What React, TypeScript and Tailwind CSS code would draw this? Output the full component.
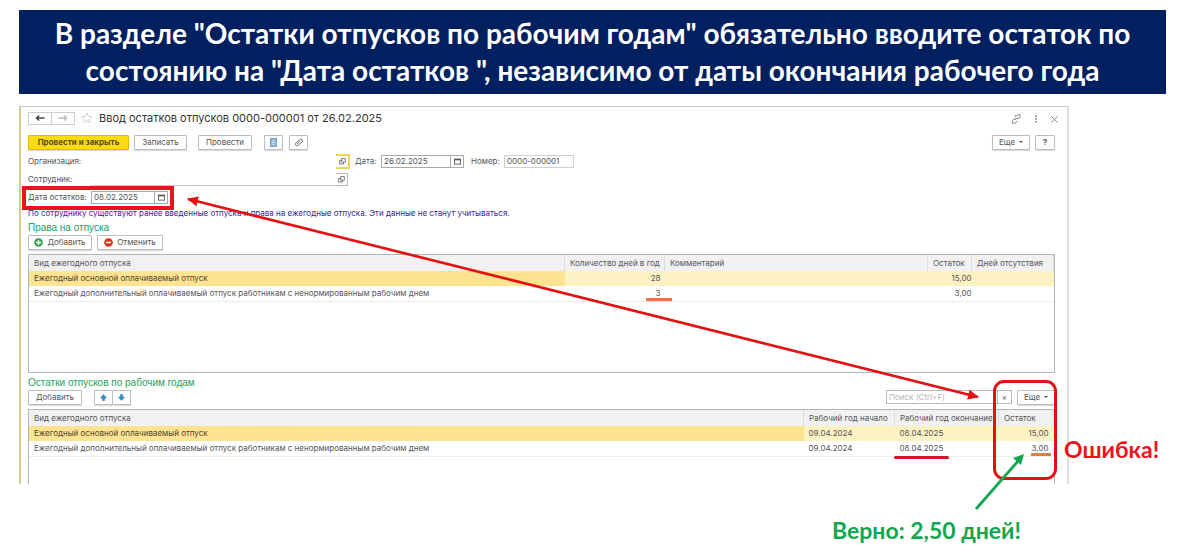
import type { ReactNode } from "react";

const button =
  "flex h-[15px] items-center justify-center rounded-[1px] border border-[#bdbdbd] bg-white text-[#555] shadow-[0_1px_1px_#d8d8d8]";
const headCell = "border-r border-[#dcdcdc] px-[5px] text-left font-normal whitespace-nowrap";

function CalendarIcon() {
  return (
    <svg viewBox="0 0 8 8" className="size-[7px]" fill="none" stroke="#555" aria-hidden="true">
      <rect x="0.5" y="1.5" width="7" height="5.5" />
      <path d="M0 1.8h8" strokeWidth="1.8" />
    </svg>
  );
}

function OpenIcon() {
  return (
    <svg viewBox="0 0 8 8" className="size-[7px]" fill="none" stroke="#555" strokeWidth="0.9" aria-hidden="true">
      <path d="M3 .7h4.3v4H3zM3 2.8H.7v4h4.5V4.7" />
    </svg>
  );
}

function Arrow({ dir, color }: { dir: "left" | "right"; color: string }) {
  return (
    <svg viewBox="0 0 10 8" className="h-2 w-[10px]" fill="none" stroke={color} strokeWidth="1.5" aria-hidden="true">
      {dir === "left" ? <path d="M9.5 4H1.5M4 1.5 1.5 4 4 6.5" /> : <path d="M.5 4h8M6 1.5 8.5 4 6 6.5" />}
    </svg>
  );
}

function BlueArrow({ down }: { down?: boolean }) {
  return (
    <svg viewBox="0 0 8 8" className="size-[7px]" fill="#2f93c8" stroke="#1d6f9f" strokeWidth="0.5" aria-hidden="true">
      {down ? <path d="M2.7.5h2.6v3h2.2L4 7.5.5 3.5h2.2z" /> : <path d="M4 .5 7.5 4.5H5.3v3H2.7v-3H.5z" />}
    </svg>
  );
}

function DateField({ id, label, value, wide }: { id: string; label: string; value: string; wide?: boolean }) {
  return (
    <div className="flex items-center">
      <label htmlFor={id} className={wide ? "w-[26px]" : "w-[63px] whitespace-nowrap"}>
        {label}
      </label>
      <input
        id={id}
        defaultValue={value}
        className={
          wide
            ? "h-[13px] w-[70px] border border-[#aaa] bg-white px-[2px] text-[8px]"
            : "h-[13px] w-[64px] border border-[#aaa] bg-white px-[2px] text-[8px]"
        }
      />
      <button
        type="button"
        aria-label="Календарь"
        className="flex h-[13px] w-[13px] items-center justify-center border border-l-0 border-[#aaa]"
      >
        <CalendarIcon />
      </button>
    </div>
  );
}

function Marked({ children, line }: { children: ReactNode; line: string }) {
  return (
    <span className="relative">
      {children}
      <span className={line} />
    </span>
  );
}

function RightsTable() {
  return (
    <div className="h-[119px] border border-[#b5b5b5]">
      <table className="w-full table-fixed border-collapse">
        <colgroup>
          <col />
          <col className="w-[100px]" />
          <col className="w-[263px]" />
          <col className="w-[44px]" />
          <col className="w-[82px]" />
        </colgroup>
        <thead>
          <tr className="h-[16px] bg-[#f1f1f1]">
            <th className={headCell}>Вид ежегодного отпуска</th>
            <th className={headCell}>Количество дней в год</th>
            <th className={headCell}>Комментарий</th>
            <th className={headCell}>Остаток</th>
            <th className={headCell}>Дней отсутствия</th>
          </tr>
        </thead>
        <tbody>
          <tr className="h-[15px] bg-[#fdf2c4]">
            <td className="bg-[#fee391] px-[5px] text-[#4d4630]">Ежегодный основной оплачиваемый отпуск</td>
            <td className="px-[4px] text-right">28</td>
            <td />
            <td className="text-right">15,00</td>
            <td />
          </tr>
          <tr className="h-[15px] border-b border-[#ececec]">
            <td className="px-[5px] whitespace-nowrap">
              Ежегодный дополнительный оплачиваемый отпуск работникам с ненормированным рабочим днем
            </td>
            <td className="px-[4px] text-right">
              <Marked line="absolute -right-[11px] -bottom-[3px] h-[3px] w-[26px] bg-[#dd7f3c]">3</Marked>
            </td>
            <td />
            <td className="text-right">3,00</td>
            <td />
          </tr>
        </tbody>
      </table>
    </div>
  );
}

function BalancesTable() {
  return (
    <div className="h-[75px] border border-b-0 border-[#b5b5b5]">
      <table className="w-full table-fixed border-collapse">
        <colgroup>
          <col />
          <col className="w-[91px]" />
          <col className="w-[104px]" />
          <col className="w-[55px]" />
        </colgroup>
        <thead>
          <tr className="h-[16px] bg-[#f1f1f1]">
            <th className={headCell}>Вид ежегодного отпуска</th>
            <th className={headCell}>Рабочий год начало</th>
            <th className={headCell}>Рабочий год окончание</th>
            <th className={headCell}>Остаток</th>
          </tr>
        </thead>
        <tbody>
          <tr className="h-[15px] bg-[#fdf2c4]">
            <td className="bg-[#fee391] px-[5px] text-[#4d4630]">Ежегодный основной оплачиваемый отпуск</td>
            <td className="px-[5px]">09.04.2024</td>
            <td className="px-[5px]">08.04.2025</td>
            <td className="px-[5px] text-right">15,00</td>
          </tr>
          <tr className="h-[15px] border-b border-[#ececec]">
            <td className="px-[5px] whitespace-nowrap">
              Ежегодный дополнительный оплачиваемый отпуск работникам с ненормированным рабочим днем
            </td>
            <td className="px-[5px]">09.04.2024</td>
            <td className="px-[5px]">
              <Marked line="absolute -bottom-[6px] -left-[6px] h-[3px] w-[55px] rounded-full bg-[#d3142c]">
                08.04.2025
              </Marked>
            </td>
            <td className="px-[5px] text-right">
              <Marked line="absolute -right-[2px] -bottom-[3px] h-[3px] w-[20px] bg-[#dd7f3c]">3,00</Marked>
            </td>
          </tr>
        </tbody>
      </table>
    </div>
  );
}

function Annotations() {
  return (
    <div className="pointer-events-none absolute inset-0">
      <div className="absolute top-[80px] left-[3px] h-[24px] w-[152px] border-4 border-[#e8131f]" />
      <svg
        className="absolute top-[93px] right-[91px] left-[169px] h-[198px] w-[calc(100%-260px)] overflow-visible"
        aria-hidden="true"
      >
        <defs>
          <marker
            id="redHead"
            viewBox="0 0 11 10"
            refX="10"
            refY="5"
            markerWidth="11"
            markerHeight="10"
            markerUnits="userSpaceOnUse"
            orient="auto-start-reverse"
          >
            <path d="M0 0 11 5 0 10z" fill="#e60f12" />
          </marker>
        </defs>
        <line
          x1="0"
          y1="0"
          x2="100%"
          y2="100%"
          stroke="#e60f12"
          strokeWidth="2.6"
          markerStart="url(#redHead)"
          markerEnd="url(#redHead)"
        />
      </svg>
      <div className="absolute top-[274px] right-[12px] h-[100px] w-[64px] rounded-[11px] border-3 border-[#e60f12]" />
      <svg
        viewBox="0 0 52 58"
        className="absolute top-[346px] right-[43px] h-[58px] w-[52px]"
        fill="none"
        aria-hidden="true"
      >
        <path d="M2 57 45 8" stroke="#12a650" strokeWidth="2.8" />
        <path d="M50 2 47 13 39 6z" fill="#12a650" />
      </svg>
      <strong className="absolute top-[328px] left-[calc(100%-5px)] font-[Lato,sans-serif] text-[23px] leading-[30px] whitespace-nowrap text-[#f01018]">
        Ошибка!
      </strong>
      <strong className="absolute top-[409px] right-[48px] font-[Lato,sans-serif] text-[23px] leading-[30px] whitespace-nowrap text-[#12a650]">
        Верно: 2,50 дней!
      </strong>
    </div>
  );
}

function EntryWindow() {
  return (
    <section className="relative mt-3 mr-[97px] font-[Inter,'Liberation_Sans',sans-serif] text-[8px] leading-[11px] text-[#555]">
      <div className="flex flex-col border-t border-r-2 border-l-2 border-t-[#c9c9c9] border-r-[#dedede] border-l-[#d2cf8e] bg-white pr-[12px] pl-[7px]">
        <header className="flex h-[25px] items-center pb-[3px]">
          <div className="flex">
            <button type="button" aria-label="Назад" className="flex h-[13px] w-6 items-center justify-center border border-[#ccc]">
              <Arrow dir="left" color="#444" />
            </button>
            <button type="button" aria-label="Вперед" className="flex h-[13px] w-[23px] items-center justify-center border border-l-0 border-[#ccc]">
              <Arrow dir="right" color="#bbb" />
            </button>
          </div>
          <svg viewBox="0 0 12 12" className="ml-[6px] size-3" fill="none" stroke="#d0d0d0" strokeWidth="0.9" aria-hidden="true">
            <path d="m6 1 1.4 3.4 3.6.3-2.7 2.4.8 3.6L6 8.8l-3.1 1.9.8-3.6L1 4.7l3.6-.3z" />
          </svg>
          <h2 className="ml-[6px] text-[11px] leading-[15px] text-[#333]">
            Ввод остатков отпусков 0000-000001 от 26.02.2025
          </h2>
          <div className="-mr-[3px] ml-auto flex items-center gap-[11px] pt-[2px]">
            <svg viewBox="0 0 10 10" className="size-[10px]" fill="none" stroke="#888" strokeWidth="1" aria-hidden="true">
              <path d="M4.2 3.2V1.6h1.6L7 .8h2v2.8L7.6 4.6H5.8M5.8 6.8v1L4 9.2H1.4V6.4L3 5h1.6" />
              <path d="M3.8 6.2 6.4 3.6" />
            </svg>
            <svg viewBox="0 0 8 10" className="h-[10px] w-2" fill="#777" aria-hidden="true">
              <path d="M3.2 1.5h1.6v1.6H3.2zM3.2 4.2h1.6v1.6H3.2zM3.2 6.9h1.6v1.6H3.2z" />
            </svg>
            <svg viewBox="0 0 8 8" className="size-[7px]" stroke="#777" strokeWidth="1" aria-hidden="true">
              <path d="m.5.5 7 7m0-7-7 7" />
            </svg>
          </div>
        </header>

        <div className="flex h-5 items-center">
          <button type="button" className="flex h-[15px] w-[101px] items-center justify-center rounded-[1px] border border-[#dfb90c] bg-[#fbdc10] font-bold text-[#5b4d0c] shadow-[0_1px_1px_#d8d8d8]">
            Провести и закрыть
          </button>
          <button type="button" className={`${button} ml-[5px] w-[53px]`}>
            Записать
          </button>
          <button type="button" className={`${button} ml-[11px] w-[54px]`}>
            Провести
          </button>
          <button type="button" aria-label="Отчет" className={`${button} ml-3 w-[19px]`}>
            <svg viewBox="0 0 8 10" className="h-[9px] w-[7px]" aria-hidden="true">
              <path d="M.5.5h7v9h-7z" fill="#8db9db" stroke="#5d8fb7" />
              <path d="M2 3h4M2 5h4M2 7h4" stroke="#e8f2fa" strokeWidth="0.7" />
            </svg>
          </button>
          <button type="button" aria-label="Файлы" className={`${button} ml-[6px] w-[19px]`}>
            <svg viewBox="0 0 10 10" className="size-[9px]" fill="none" stroke="#555" strokeWidth="0.9" aria-hidden="true">
              <path d="M3 6.8 7 3.6M2.4 8.4a1.5 1.5 0 0 1-.6-2.6L6.2 2a1.9 1.9 0 0 1 2.6 2.8L4.6 8.2a1.9 1.9 0 0 1-2.2.2" />
            </svg>
          </button>
          <button type="button" className={`${button} ml-auto w-[38px]`}>
            Еще <span className="ml-1 border-x-2 border-t-2 border-x-transparent border-t-[#555]" />
          </button>
          <button type="button" className={`${button} ml-[5px] w-5 font-bold`}>
            ?
          </button>
        </div>

        <div className="flex h-[18px] items-center">
          <label htmlFor="org" className="w-[62px]">
            Организация:
          </label>
          <input id="org" className="h-[14px] w-[246px] px-1" />
          <button type="button" aria-label="Открыть организацию" className="flex h-[15px] w-[14px] items-center justify-center border-2 border-l-0 border-[#ecd55a]">
            <OpenIcon />
          </button>
          <div className="ml-[5px]">
            <DateField id="date" label="Дата:" value="26.02.2025" wide />
          </div>
          <label htmlFor="number" className="ml-[7px] w-[33px]">
            Номер:
          </label>
          <input id="number" defaultValue="0000-000001" className="h-[13px] w-[70px] border border-[#d0d0d0] px-[2px] text-[8px]" />
        </div>

        <div className="flex h-[18px] items-center">
          <label htmlFor="employee" className="w-[62px]">
            Сотрудник:
          </label>
          <input id="employee" className="h-[13px] w-[246px] border-b border-[#c8c8c8] px-1" />
          <button type="button" aria-label="Открыть сотрудника" className="flex h-[13px] w-[12px] items-center justify-center border border-l-0 border-[#bbb]">
            <OpenIcon />
          </button>
        </div>

        <div className="flex h-[18px] items-center">
          <DateField id="balance-date" label="Дата остатков:" value="08.02.2025" />
        </div>

        <p className="flex h-[14px] items-center whitespace-nowrap text-[#2e2a96]">
          По сотруднику существуют ранее введенные отпуска и права на ежегодные отпуска. Эти данные не станут учитываться.
        </p>

        <h3 className="flex h-[14px] items-center font-['Liberation_Sans',sans-serif] text-[10px] text-[#27a05a]">
          Права на отпуска
        </h3>
        <div className="mb-1 flex h-4 items-center gap-[5px]">
          <button type="button" className={`${button} w-[64px] gap-1`}>
            <svg viewBox="0 0 10 10" className="size-[9px]" aria-hidden="true">
              <circle cx="5" cy="5" r="4.8" fill="#35a24b" />
              <path d="M5 2.3v5.4M2.3 5h5.4" stroke="#fff" strokeWidth="1.6" />
            </svg>
            Добавить
          </button>
          <button type="button" className={`${button} w-[66px] gap-1`}>
            <svg viewBox="0 0 10 10" className="size-[9px]" aria-hidden="true">
              <circle cx="5" cy="5" r="4.8" fill="#d8351f" />
              <path d="M2.3 5h5.4" stroke="#fff" strokeWidth="1.8" />
            </svg>
            Отменить
          </button>
        </div>
        <RightsTable />

        <h3 className="mt-[2px] flex h-[14px] items-center font-['Liberation_Sans',sans-serif] text-[10px] text-[#27a05a]">
          Остатки отпусков по рабочим годам
        </h3>
        <div className="mb-1 flex h-4 items-center">
          <button type="button" className={`${button} w-[54px]`}>
            Добавить
          </button>
          <button type="button" aria-label="Переместить вверх" className={`${button} ml-3 w-[19px]`}>
            <BlueArrow />
          </button>
          <button type="button" aria-label="Переместить вниз" className={`${button} w-[18px] border-l-0`}>
            <BlueArrow down />
          </button>
          <input
            type="text"
            aria-label="Поиск"
            placeholder="Поиск (Ctrl+F)"
            className="ml-auto h-[14px] w-[112px] border border-[#bbb] px-[2px] text-[8px] placeholder:text-[#b5b5b5]"
          />
          <button type="button" aria-label="Очистить поиск" className="flex h-[14px] w-[14px] items-center justify-center border border-l-0 border-[#bbb]">
            ×
          </button>
          <button type="button" className={`${button} ml-[5px] w-[38px]`}>
            Еще <span className="ml-1 border-x-2 border-t-2 border-x-transparent border-t-[#555]" />
          </button>
        </div>
        <BalancesTable />
      </div>
      <Annotations />
    </section>
  );
}

export default function App() {
  return (
    <main className="min-h-screen overflow-hidden bg-white pt-[10px] pr-[22px] pb-16 pl-[19px]">
      <h1 className="bg-[#002060] px-8 pt-[5px] pb-[5px] text-center font-[Lato,sans-serif] text-[28px] leading-[37px] font-bold text-white">
        В разделе "Остатки отпусков по рабочим годам" обязательно вводите остаток по состоянию на "Дата остатков ",
        независимо от даты окончания рабочего года
      </h1>
      <EntryWindow />
    </main>
  );
}
